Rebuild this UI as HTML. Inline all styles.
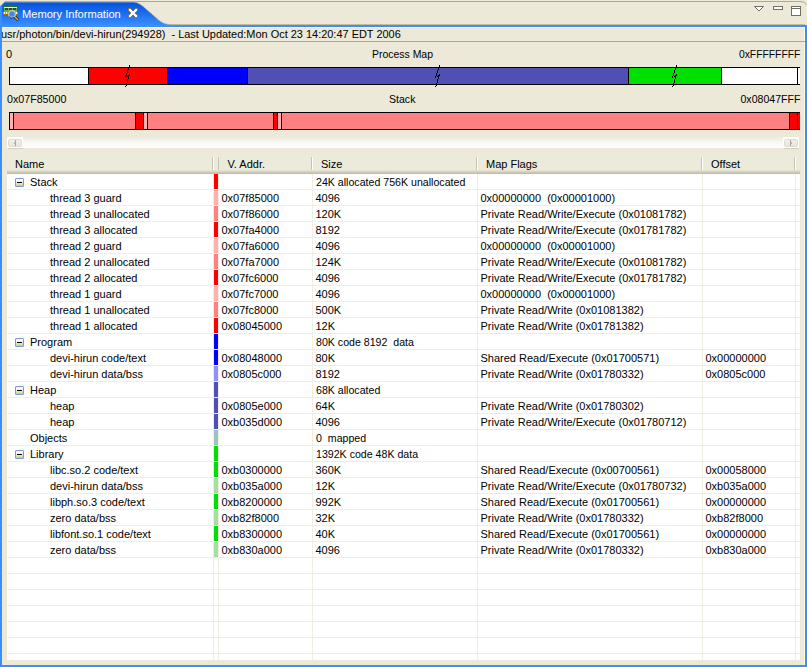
<!DOCTYPE html>
<html><head><meta charset="utf-8">
<style>
*{margin:0;padding:0;box-sizing:border-box}
html,body{width:807px;height:667px;overflow:hidden;background:#ece9d8}
body{position:relative;font-family:"Liberation Sans",sans-serif;font-size:11px;line-height:13px;color:#000}
.a{position:absolute}
.t{position:absolute;white-space:pre;line-height:13px;height:13px}
.bar{position:absolute;border:1px solid #000;border-right:none;overflow:hidden}
.seg{position:absolute;top:0;bottom:0}
.sep{position:absolute;top:0;bottom:0;width:1px;background:#000}
#tbl{position:absolute;left:7px;top:154px;width:793px;height:506px;background:#fff;overflow:hidden}
.hl{position:absolute;left:0;width:793px;height:1px;background:#f0eee1}
.vl{position:absolute;top:20px;width:1px;height:486px;background:#f0eee1}
.cb{position:absolute;left:207px;width:4px;height:15px}
.ex{position:absolute;left:8px;width:9px;height:9px;border:1px solid #7b9ebd;border-radius:1px;background:linear-gradient(#fff,#f2f1ea 40%,#cfc5aa)}
.ex:after{content:"";position:absolute;left:1px;top:3px;width:5px;height:1px;background:#000}
</style></head><body>
<svg class="a" style="left:0;top:0" width="807" height="27" viewBox="0 0 807 27"><path d="M5,1.5 L801,1.5 Q804,1.5 807,5" fill="none" stroke="#aca899" stroke-width="1"/></svg>
<div class="a" style="left:168px;top:24px;width:637px;height:1px;background:#c9b995"></div>
<svg class="a" style="left:0;top:0" width="180" height="27" viewBox="0 0 180 27"><defs><linearGradient id="tg" x1="0" y1="0" x2="0" y2="1"><stop offset="0" stop-color="#0052e0"/><stop offset="0.35" stop-color="#1766ec"/><stop offset="1" stop-color="#3d92fb"/></linearGradient></defs><path d="M0,27 L0,6.5 L4.5,2 L134,2 C137.5,2.3 140,4 143,6.3 L156.5,18 C160,21.5 164,24.3 171,24.5 L180,24.5 L180,27 Z" fill="url(#tg)"/><path d="M0,6.5 L4.5,2 L134,2 C137.5,2.3 140,4 143,6.3 L156.5,18 C160,21.5 164,24.3 171,24.5 L180,24.5" fill="none" stroke="#c9b995" stroke-width="0.8"/></svg>
<div class="a" style="left:0;top:25px;width:807px;height:2px;background:#3d8ff8"></div>
<div class="a" style="left:0;top:6px;width:2px;height:661px;background:#3d8ff8"></div>
<div class="a" style="left:805px;top:25px;width:2px;height:642px;background:#3d8ff8"></div>
<div class="a" style="left:0;top:665px;width:807px;height:2px;background:#3d8ff8"></div>
<div class="a" style="left:2px;top:27px;width:803px;height:1px;background:#fff7e6"></div>
<div class="a" style="left:804px;top:27px;width:1px;height:638px;background:#fff7e6"></div>
<svg class="a" style="left:3px;top:6px" width="17" height="16" viewBox="0 0 17 16" shape-rendering="crispEdges">
<rect x="0" y="0" width="15" height="6" fill="#2b7410"/>
<rect x="1" y="1" width="13" height="5" fill="#62b04c"/>
<rect x="1" y="1" width="13" height="1" fill="#f4f8ee"/>
<rect x="2" y="2" width="3" height="2" fill="#403c4a"/><rect x="6" y="2" width="3" height="2" fill="#403c4a"/><rect x="10" y="2" width="3" height="2" fill="#403c4a"/>
<rect x="0" y="6" width="15" height="3" fill="#d89a10"/>
<rect x="0" y="8" width="15" height="1" fill="#a86a00"/>
<rect x="1" y="6" width="1" height="2" fill="#fff6c0"/><rect x="3" y="6" width="1" height="2" fill="#fff6c0"/><rect x="13" y="6" width="1" height="2" fill="#fff6c0"/>
</svg>
<svg class="a" style="left:3px;top:6px" width="17" height="16" viewBox="0 0 17 16">
<circle cx="9" cy="8" r="3.4" fill="#3a8af5" stroke="#d0c8a8" stroke-width="1.2"/>
<path d="M6,10.5 A3.6,3.6 0 0 0 11,11.5" fill="none" stroke="#303030" stroke-width="0.9"/>
<path d="M11.8,10.8 L15.3,14.3" stroke="#1a1a1a" stroke-width="3"/>
<path d="M11.8,10.8 L15,14" stroke="#f0b020" stroke-width="1.6"/>
</svg>
<div class="t" style="left:22px;top:8px;color:#fff;transform-origin:0 0;transform:scaleX(1.01)">Memory Information</div>
<svg class="a" style="left:128px;top:8px" width="10" height="10" viewBox="0 0 10 10" shape-rendering="crispEdges"><path d="M0,0h1v1h-1zM1,0h1v1h-1zM2,0h1v1h-1zM7,0h1v1h-1zM8,0h1v1h-1zM9,0h1v1h-1zM0,1h1v1h-1zM3,1h1v1h-1zM6,1h1v1h-1zM9,1h1v1h-1zM0,2h1v1h-1zM4,2h1v1h-1zM5,2h1v1h-1zM9,2h1v1h-1zM1,3h1v1h-1zM8,3h1v1h-1zM2,4h1v1h-1zM7,4h1v1h-1zM2,5h1v1h-1zM7,5h1v1h-1zM1,6h1v1h-1zM8,6h1v1h-1zM0,7h1v1h-1zM4,7h1v1h-1zM5,7h1v1h-1zM9,7h1v1h-1zM0,8h1v1h-1zM3,8h1v1h-1zM6,8h1v1h-1zM9,8h1v1h-1zM0,9h1v1h-1zM1,9h1v1h-1zM2,9h1v1h-1zM7,9h1v1h-1zM8,9h1v1h-1zM9,9h1v1h-1z" fill="#86785a"/><path d="M1,1h1v1h-1zM2,1h1v1h-1zM7,1h1v1h-1zM8,1h1v1h-1zM1,2h1v1h-1zM2,2h1v1h-1zM3,2h1v1h-1zM6,2h1v1h-1zM7,2h1v1h-1zM8,2h1v1h-1zM2,3h1v1h-1zM3,3h1v1h-1zM4,3h1v1h-1zM5,3h1v1h-1zM6,3h1v1h-1zM7,3h1v1h-1zM3,4h1v1h-1zM4,4h1v1h-1zM5,4h1v1h-1zM6,4h1v1h-1zM3,5h1v1h-1zM4,5h1v1h-1zM5,5h1v1h-1zM6,5h1v1h-1zM2,6h1v1h-1zM3,6h1v1h-1zM4,6h1v1h-1zM5,6h1v1h-1zM6,6h1v1h-1zM7,6h1v1h-1zM1,7h1v1h-1zM2,7h1v1h-1zM3,7h1v1h-1zM6,7h1v1h-1zM7,7h1v1h-1zM8,7h1v1h-1zM1,8h1v1h-1zM2,8h1v1h-1zM7,8h1v1h-1zM8,8h1v1h-1z" fill="#fff"/></svg>
<svg class="a" style="left:753px;top:5px" width="52" height="12" viewBox="0 0 52 12">
<path d="M1.5,1.5 L10.5,1.5 L6,6 Z" fill="#fff" stroke="#716f64"/>
<rect x="20.5" y="1.5" width="9" height="3" fill="#fff" stroke="#716f64"/>
<rect x="38.5" y="1.5" width="9" height="9" fill="#fff" stroke="#716f64"/>
<rect x="39" y="3" width="8" height="1" fill="#716f64"/>
</svg>
<div class="a" style="left:2px;top:28px;width:803px;height:13px;overflow:hidden"><div class="t" style="left:-1px;top:0;transform-origin:0 0;transform:scaleX(0.9955)">usr/photon/bin/devi-hirun(294928)  - Last Updated:Mon Oct 23 14:20:47 EDT 2006</div></div>
<div class="a" style="left:2px;top:41px;width:803px;height:1px;background:#aca899"></div>
<div class="t" style="left:6px;top:48px;transform-origin:0 0;transform:scaleX(1.0)">0</div>
<div class="t" style="left:372px;top:48px;transform-origin:0 0;transform:scaleX(0.95)">Process Map</div>
<div class="t" style="right:7px;top:48px;transform-origin:100% 0;transform:scaleX(0.94)">0xFFFFFFFF</div>
<div class="bar" style="left:9px;top:67px;width:791px;height:18px"><div class="seg" style="left:0px;width:78px;background:#fff"></div><div class="sep" style="left:78px"></div><div class="seg" style="left:79px;width:78px;background:#ff0000"></div><div class="sep" style="left:157px"></div><div class="seg" style="left:158px;width:79px;background:#0000ff"></div><div class="sep" style="left:237px"></div><div class="seg" style="left:238px;width:380px;background:#5050b4"></div><div class="sep" style="left:618px"></div><div class="seg" style="left:619px;width:92px;background:#00e000"></div><div class="sep" style="left:711px"></div><div class="seg" style="left:712px;width:75px;background:#fff"></div><div class="sep" style="left:787px"></div><div class="seg" style="left:788px;width:3px;background:#fff"></div></div>
<svg class="a" style="left:125px;top:65px" width="5" height="22" viewBox="0 0 5 22" shape-rendering="crispEdges"><path d="M4,0h1v1h-1zM4,1h1v1h-1zM4,2h1v1h-1zM3,3h1v1h-1zM3,4h1v1h-1zM2,5h1v1h-1zM2,6h1v1h-1zM2,7h1v1h-1zM1,8h1v1h-1zM1,9h1v1h-1zM1,10h1v1h-1zM0,11h1v1h-1zM0,12h1v1h-1zM4,9h1v1h-1zM4,10h1v1h-1zM3,10h1v1h-1zM2,11h1v1h-1zM3,11h1v1h-1zM3,12h1v1h-1zM3,13h1v1h-1zM2,14h1v1h-1zM2,15h1v1h-1zM2,16h1v1h-1zM2,17h1v1h-1zM1,18h1v1h-1zM1,19h1v1h-1zM1,20h1v1h-1zM0,21h1v1h-1z" fill="#000"/></svg>
<svg class="a" style="left:435px;top:65px" width="5" height="22" viewBox="0 0 5 22" shape-rendering="crispEdges"><path d="M4,0h1v1h-1zM4,1h1v1h-1zM4,2h1v1h-1zM3,3h1v1h-1zM3,4h1v1h-1zM2,5h1v1h-1zM2,6h1v1h-1zM2,7h1v1h-1zM1,8h1v1h-1zM1,9h1v1h-1zM1,10h1v1h-1zM0,11h1v1h-1zM0,12h1v1h-1zM4,9h1v1h-1zM4,10h1v1h-1zM3,10h1v1h-1zM2,11h1v1h-1zM3,11h1v1h-1zM3,12h1v1h-1zM3,13h1v1h-1zM2,14h1v1h-1zM2,15h1v1h-1zM2,16h1v1h-1zM2,17h1v1h-1zM1,18h1v1h-1zM1,19h1v1h-1zM1,20h1v1h-1zM0,21h1v1h-1z" fill="#000"/></svg>
<svg class="a" style="left:672px;top:65px" width="5" height="22" viewBox="0 0 5 22" shape-rendering="crispEdges"><path d="M4,0h1v1h-1zM4,1h1v1h-1zM4,2h1v1h-1zM3,3h1v1h-1zM3,4h1v1h-1zM2,5h1v1h-1zM2,6h1v1h-1zM2,7h1v1h-1zM1,8h1v1h-1zM1,9h1v1h-1zM1,10h1v1h-1zM0,11h1v1h-1zM0,12h1v1h-1zM4,9h1v1h-1zM4,10h1v1h-1zM3,10h1v1h-1zM2,11h1v1h-1zM3,11h1v1h-1zM3,12h1v1h-1zM3,13h1v1h-1zM2,14h1v1h-1zM2,15h1v1h-1zM2,16h1v1h-1zM2,17h1v1h-1zM1,18h1v1h-1zM1,19h1v1h-1zM1,20h1v1h-1zM0,21h1v1h-1z" fill="#000"/></svg>
<div class="t" style="left:7px;top:93px;transform-origin:0 0;transform:scaleX(0.97)">0x07F85000</div>
<div class="t" style="left:389px;top:93px;transform-origin:0 0;transform:scaleX(0.96)">Stack</div>
<div class="t" style="right:7px;top:93px;transform-origin:100% 0;transform:scaleX(0.96)">0x08047FFF</div>
<div class="bar" style="left:9px;top:112px;width:791px;height:18px"><div class="seg" style="left:0px;width:3px;background:#ffb0b0"></div><div class="sep" style="left:3px"></div><div class="seg" style="left:4px;width:121px;background:#ff8080"></div><div class="sep" style="left:125px"></div><div class="seg" style="left:126px;width:7px;background:#ff0000"></div><div class="sep" style="left:133px"></div><div class="seg" style="left:134px;width:3px;background:#ffb0b0"></div><div class="sep" style="left:137px"></div><div class="seg" style="left:138px;width:125px;background:#ff8080"></div><div class="sep" style="left:263px"></div><div class="seg" style="left:264px;width:3px;background:#ff0000"></div><div class="sep" style="left:267px"></div><div class="seg" style="left:268px;width:3px;background:#ffb0b0"></div><div class="sep" style="left:271px"></div><div class="seg" style="left:272px;width:507px;background:#ff8080"></div><div class="sep" style="left:779px"></div><div class="seg" style="left:780px;width:7px;background:#ff0000"></div><div class="sep" style="left:787px"></div><div class="seg" style="left:788px;width:3px;background:#ff0000"></div></div>
<div class="a" style="left:7px;top:137px;width:792px;height:11px;background:linear-gradient(#ebeae3,#f7f7f3 45%,#fff)"></div>
<div class="a" style="left:7px;top:137px;width:16px;height:11px;background:#fff"><div class="a" style="left:1px;top:2px;width:14px;height:8px;border:1px solid #dcdcd2;border-radius:2px;background:linear-gradient(#f0f0ea,#e6e6de)"></div><div class="a" style="left:8px;top:3px;width:1px;height:6px;background:#a8a8a0"></div><div class="a" style="left:7px;top:5px;width:1px;height:2px;background:#b8b8b0"></div></div><div class="a" style="left:8px;top:148px;width:15px;height:1px;background:#cfcfbf"></div>
<div class="a" style="left:783px;top:137px;width:16px;height:11px;background:#fff"><div class="a" style="left:1px;top:2px;width:14px;height:8px;border:1px solid #dcdcd2;border-radius:2px;background:linear-gradient(#f0f0ea,#e6e6de)"></div><div class="a" style="left:7px;top:3px;width:1px;height:6px;background:#a8a8a0"></div><div class="a" style="left:8px;top:5px;width:1px;height:2px;background:#b8b8b0"></div></div><div class="a" style="left:784px;top:148px;width:15px;height:1px;background:#cfcfbf"></div>
<div id="tbl">
<div class="a" style="left:0;top:0;width:793px;height:20px;background:#ebeadb"></div>
<div class="a" style="left:0;top:16px;width:793px;height:1px;background:#e4e1d1"></div>
<div class="a" style="left:0;top:17px;width:793px;height:1px;background:#d8d5c4"></div>
<div class="a" style="left:0;top:18px;width:793px;height:1px;background:#ccc9b7"></div>
<div class="a" style="left:0;top:19px;width:793px;height:1px;background:#c0bdab"></div>
<div class="a" style="left:205px;top:3px;width:1px;height:13px;background:#c7c5b2"></div>
<div class="a" style="left:206px;top:3px;width:1px;height:13px;background:#fff"></div>
<div class="a" style="left:211px;top:3px;width:1px;height:13px;background:#c7c5b2"></div>
<div class="a" style="left:304px;top:3px;width:1px;height:13px;background:#c7c5b2"></div>
<div class="a" style="left:305px;top:3px;width:1px;height:13px;background:#fff"></div>
<div class="a" style="left:469px;top:3px;width:1px;height:13px;background:#c7c5b2"></div>
<div class="a" style="left:470px;top:3px;width:1px;height:13px;background:#fff"></div>
<div class="a" style="left:694px;top:3px;width:1px;height:13px;background:#c7c5b2"></div>
<div class="a" style="left:695px;top:3px;width:1px;height:13px;background:#fff"></div>
<div class="a" style="left:787px;top:3px;width:1px;height:13px;background:#c7c5b2"></div>
<div class="a" style="left:788px;top:3px;width:1px;height:13px;background:#fff"></div>
<div class="t" style="left:8px;top:4px">Name</div>
<div class="t" style="left:220.5px;top:4px">V. Addr.</div>
<div class="t" style="left:314px;top:4px">Size</div>
<div class="t" style="left:479px;top:4px">Map Flags</div>
<div class="t" style="left:704px;top:4px">Offset</div>
<div class="hl" style="top:35px"></div>
<div class="hl" style="top:51px"></div>
<div class="hl" style="top:67px"></div>
<div class="hl" style="top:83px"></div>
<div class="hl" style="top:99px"></div>
<div class="hl" style="top:115px"></div>
<div class="hl" style="top:131px"></div>
<div class="hl" style="top:147px"></div>
<div class="hl" style="top:163px"></div>
<div class="hl" style="top:179px"></div>
<div class="hl" style="top:195px"></div>
<div class="hl" style="top:211px"></div>
<div class="hl" style="top:227px"></div>
<div class="hl" style="top:243px"></div>
<div class="hl" style="top:259px"></div>
<div class="hl" style="top:275px"></div>
<div class="hl" style="top:291px"></div>
<div class="hl" style="top:307px"></div>
<div class="hl" style="top:323px"></div>
<div class="hl" style="top:339px"></div>
<div class="hl" style="top:355px"></div>
<div class="hl" style="top:371px"></div>
<div class="hl" style="top:387px"></div>
<div class="hl" style="top:403px"></div>
<div class="hl" style="top:419px"></div>
<div class="hl" style="top:435px"></div>
<div class="hl" style="top:451px"></div>
<div class="hl" style="top:467px"></div>
<div class="hl" style="top:483px"></div>
<div class="hl" style="top:499px"></div>
<div class="vl" style="left:206px"></div>
<div class="vl" style="left:211px"></div>
<div class="vl" style="left:305px"></div>
<div class="vl" style="left:470px"></div>
<div class="vl" style="left:695px"></div>
<div class="vl" style="left:788px"></div>
<div class="cb" style="top:20px;background:#ff0000"></div>
<div class="ex" style="top:24px"></div>
<div class="t" style="left:23px;top:22px">Stack</div>
<div class="t" style="left:308.5px;top:22px;transform-origin:0 0;transform:scaleX(0.965)">24K allocated 756K unallocated</div>
<div class="cb" style="top:36px;background:#ffb0b0"></div>
<div class="t" style="left:43px;top:38px">thread 3 guard</div>
<div class="t" style="left:214.5px;top:38px">0x07f85000</div>
<div class="t" style="left:308.5px;top:38px">4096</div>
<div class="t" style="left:473.5px;top:38px">0x00000000  (0x00001000)</div>
<div class="cb" style="top:52px;background:#ff8080"></div>
<div class="t" style="left:43px;top:54px">thread 3 unallocated</div>
<div class="t" style="left:214.5px;top:54px">0x07f86000</div>
<div class="t" style="left:308.5px;top:54px">120K</div>
<div class="t" style="left:473.5px;top:54px">Private Read/Write/Execute (0x01081782)</div>
<div class="cb" style="top:68px;background:#ff0000"></div>
<div class="t" style="left:43px;top:70px">thread 3 allocated</div>
<div class="t" style="left:214.5px;top:70px">0x07fa4000</div>
<div class="t" style="left:308.5px;top:70px">8192</div>
<div class="t" style="left:473.5px;top:70px">Private Read/Write/Execute (0x01781782)</div>
<div class="cb" style="top:84px;background:#ffb0b0"></div>
<div class="t" style="left:43px;top:86px">thread 2 guard</div>
<div class="t" style="left:214.5px;top:86px">0x07fa6000</div>
<div class="t" style="left:308.5px;top:86px">4096</div>
<div class="t" style="left:473.5px;top:86px">0x00000000  (0x00001000)</div>
<div class="cb" style="top:100px;background:#ff8080"></div>
<div class="t" style="left:43px;top:102px">thread 2 unallocated</div>
<div class="t" style="left:214.5px;top:102px">0x07fa7000</div>
<div class="t" style="left:308.5px;top:102px">124K</div>
<div class="t" style="left:473.5px;top:102px">Private Read/Write/Execute (0x01081782)</div>
<div class="cb" style="top:116px;background:#ff0000"></div>
<div class="t" style="left:43px;top:118px">thread 2 allocated</div>
<div class="t" style="left:214.5px;top:118px">0x07fc6000</div>
<div class="t" style="left:308.5px;top:118px">4096</div>
<div class="t" style="left:473.5px;top:118px">Private Read/Write/Execute (0x01781782)</div>
<div class="cb" style="top:132px;background:#ffb0b0"></div>
<div class="t" style="left:43px;top:134px">thread 1 guard</div>
<div class="t" style="left:214.5px;top:134px">0x07fc7000</div>
<div class="t" style="left:308.5px;top:134px">4096</div>
<div class="t" style="left:473.5px;top:134px">0x00000000  (0x00001000)</div>
<div class="cb" style="top:148px;background:#ff8080"></div>
<div class="t" style="left:43px;top:150px">thread 1 unallocated</div>
<div class="t" style="left:214.5px;top:150px">0x07fc8000</div>
<div class="t" style="left:308.5px;top:150px">500K</div>
<div class="t" style="left:473.5px;top:150px">Private Read/Write (0x01081382)</div>
<div class="cb" style="top:164px;background:#ff0000"></div>
<div class="t" style="left:43px;top:166px">thread 1 allocated</div>
<div class="t" style="left:214.5px;top:166px">0x08045000</div>
<div class="t" style="left:308.5px;top:166px">12K</div>
<div class="t" style="left:473.5px;top:166px">Private Read/Write (0x01781382)</div>
<div class="cb" style="top:180px;background:#0000ff"></div>
<div class="ex" style="top:184px"></div>
<div class="t" style="left:23px;top:182px">Program</div>
<div class="t" style="left:308.5px;top:182px;transform-origin:0 0;transform:scaleX(0.965)">80K code 8192  data</div>
<div class="cb" style="top:196px;background:#0000ff"></div>
<div class="t" style="left:43px;top:198px">devi-hirun code/text</div>
<div class="t" style="left:214.5px;top:198px">0x08048000</div>
<div class="t" style="left:308.5px;top:198px">80K</div>
<div class="t" style="left:473.5px;top:198px">Shared Read/Execute (0x01700571)</div>
<div class="t" style="left:698.5px;top:198px">0x00000000</div>
<div class="cb" style="top:212px;background:#9090ff"></div>
<div class="t" style="left:43px;top:214px">devi-hirun data/bss</div>
<div class="t" style="left:214.5px;top:214px">0x0805c000</div>
<div class="t" style="left:308.5px;top:214px">8192</div>
<div class="t" style="left:473.5px;top:214px">Private Read/Write (0x01780332)</div>
<div class="t" style="left:698.5px;top:214px">0x0805c000</div>
<div class="cb" style="top:228px;background:#5050b4"></div>
<div class="ex" style="top:232px"></div>
<div class="t" style="left:23px;top:230px">Heap</div>
<div class="t" style="left:308.5px;top:230px;transform-origin:0 0;transform:scaleX(0.965)">68K allocated</div>
<div class="cb" style="top:244px;background:#5050b4"></div>
<div class="t" style="left:43px;top:246px">heap</div>
<div class="t" style="left:214.5px;top:246px">0x0805e000</div>
<div class="t" style="left:308.5px;top:246px">64K</div>
<div class="t" style="left:473.5px;top:246px">Private Read/Write (0x01780302)</div>
<div class="cb" style="top:260px;background:#5050b4"></div>
<div class="t" style="left:43px;top:262px">heap</div>
<div class="t" style="left:214.5px;top:262px">0xb035d000</div>
<div class="t" style="left:308.5px;top:262px">4096</div>
<div class="t" style="left:473.5px;top:262px">Private Read/Write/Execute (0x01780712)</div>
<div class="cb" style="top:276px;background:#98c4c4"></div>
<div class="t" style="left:23px;top:278px">Objects</div>
<div class="t" style="left:308.5px;top:278px;transform-origin:0 0;transform:scaleX(0.965)">0  mapped</div>
<div class="cb" style="top:292px;background:#00e000"></div>
<div class="ex" style="top:296px"></div>
<div class="t" style="left:23px;top:294px">Library</div>
<div class="t" style="left:308.5px;top:294px;transform-origin:0 0;transform:scaleX(0.965)">1392K code 48K data</div>
<div class="cb" style="top:308px;background:#00e000"></div>
<div class="t" style="left:43px;top:310px">libc.so.2 code/text</div>
<div class="t" style="left:214.5px;top:310px">0xb0300000</div>
<div class="t" style="left:308.5px;top:310px">360K</div>
<div class="t" style="left:473.5px;top:310px">Shared Read/Execute (0x00700561)</div>
<div class="t" style="left:698.5px;top:310px">0x00058000</div>
<div class="cb" style="top:324px;background:#a0e0a0"></div>
<div class="t" style="left:43px;top:326px">devi-hirun data/bss</div>
<div class="t" style="left:214.5px;top:326px">0xb035a000</div>
<div class="t" style="left:308.5px;top:326px">12K</div>
<div class="t" style="left:473.5px;top:326px">Private Read/Write/Execute (0x01780732)</div>
<div class="t" style="left:698.5px;top:326px">0xb035a000</div>
<div class="cb" style="top:340px;background:#00e000"></div>
<div class="t" style="left:43px;top:342px">libph.so.3 code/text</div>
<div class="t" style="left:214.5px;top:342px">0xb8200000</div>
<div class="t" style="left:308.5px;top:342px">992K</div>
<div class="t" style="left:473.5px;top:342px">Shared Read/Execute (0x01700561)</div>
<div class="t" style="left:698.5px;top:342px">0x00000000</div>
<div class="cb" style="top:356px;background:#a0e0a0"></div>
<div class="t" style="left:43px;top:358px">zero data/bss</div>
<div class="t" style="left:214.5px;top:358px">0xb82f8000</div>
<div class="t" style="left:308.5px;top:358px">32K</div>
<div class="t" style="left:473.5px;top:358px">Private Read/Write (0x01780332)</div>
<div class="t" style="left:698.5px;top:358px">0xb82f8000</div>
<div class="cb" style="top:372px;background:#00e000"></div>
<div class="t" style="left:43px;top:374px">libfont.so.1 code/text</div>
<div class="t" style="left:214.5px;top:374px">0xb8300000</div>
<div class="t" style="left:308.5px;top:374px">40K</div>
<div class="t" style="left:473.5px;top:374px">Shared Read/Execute (0x01700561)</div>
<div class="t" style="left:698.5px;top:374px">0x00000000</div>
<div class="cb" style="top:388px;background:#a0e0a0"></div>
<div class="t" style="left:43px;top:390px">zero data/bss</div>
<div class="t" style="left:214.5px;top:390px">0xb830a000</div>
<div class="t" style="left:308.5px;top:390px">4096</div>
<div class="t" style="left:473.5px;top:390px">Private Read/Write (0x01780332)</div>
<div class="t" style="left:698.5px;top:390px">0xb830a000</div>
</div>
</body></html>
